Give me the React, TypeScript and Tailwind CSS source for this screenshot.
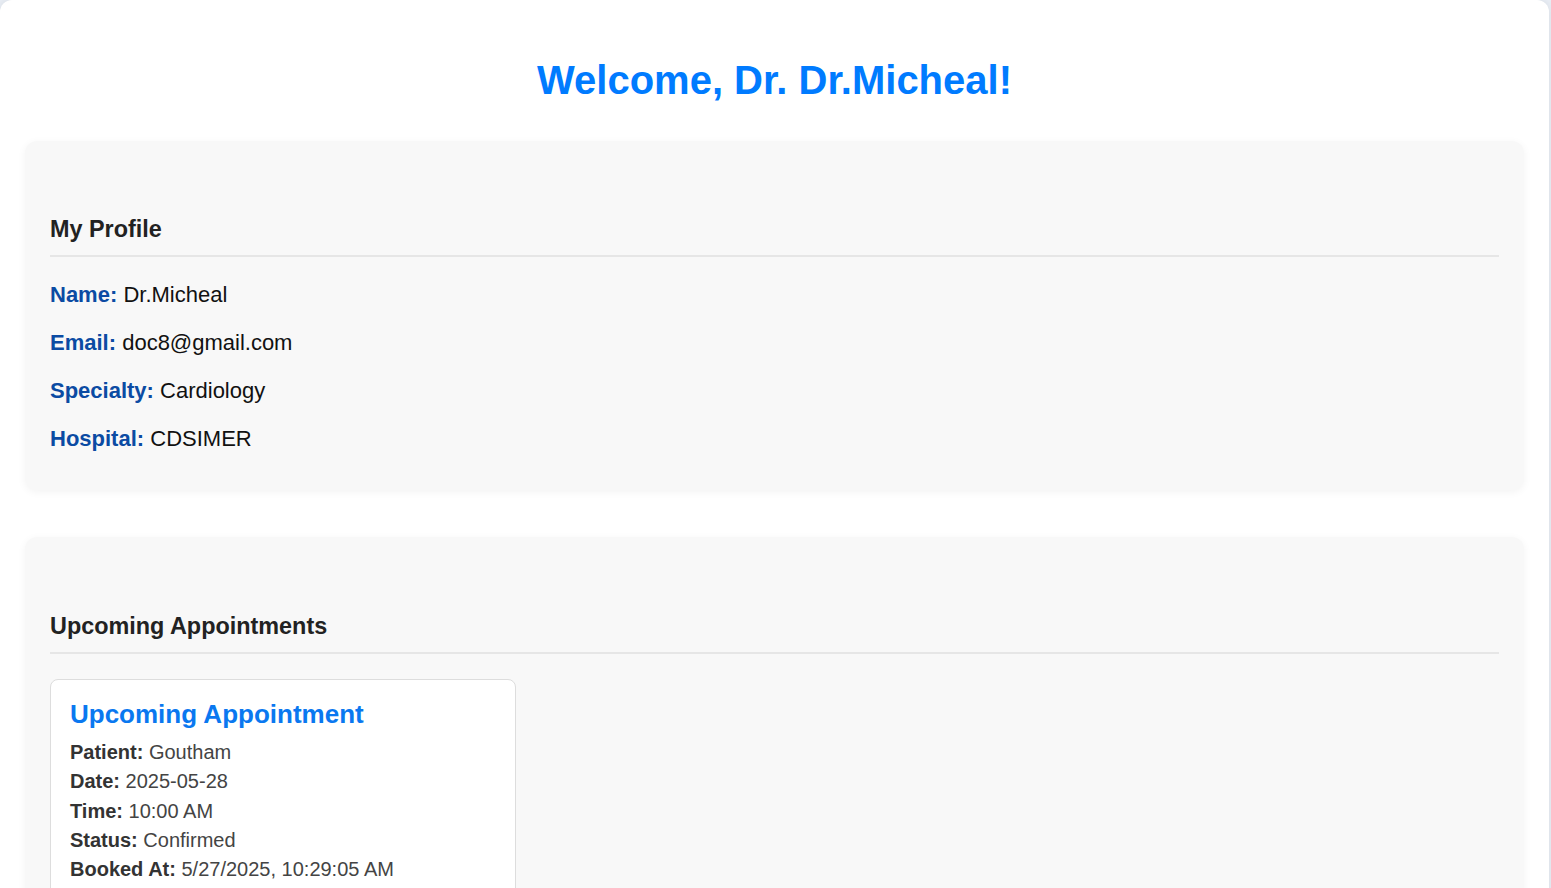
import React from 'react';

const profile = [
  { label: 'Name:', value: 'Dr.Micheal' },
  { label: 'Email:', value: 'doc8@gmail.com' },
  { label: 'Specialty:', value: 'Cardiology' },
  { label: 'Hospital:', value: 'CDSIMER' },
];

const appointment = [
  { label: 'Patient:', value: 'Goutham' },
  { label: 'Date:', value: '2025-05-28' },
  { label: 'Time:', value: '10:00 AM' },
  { label: 'Status:', value: 'Confirmed' },
  { label: 'Booked At:', value: '5/27/2025, 10:29:05 AM' },
];

export default function App() {
  return (
    <div className="min-h-screen bg-[#e9eef5] font-['Liberation_Sans',Arial,sans-serif]">
      <div className="w-[1549px] bg-white rounded-[12px] shadow-[0_0_10px_rgba(0,0,0,0.08)] px-[25px] pb-[40px]">
        <h1 className="pt-[56px] text-center text-[40px] leading-[48px] font-bold text-[#007bff]">
          Welcome, Dr. Dr.Micheal!
        </h1>

        <section className="mt-[37px] bg-[#f8f8f8] rounded-[12px] shadow-[0_2px_8px_rgba(0,0,0,0.05)] px-[25px] pt-[75px] pb-[39px]">
          <h2 className="text-[23.4px] leading-[26px] font-bold text-[#222] pb-[13px] border-b-2 border-[#e6e6e6]">
            My Profile
          </h2>
          <div className="mt-[26px] flex flex-col gap-[24px]">
            {profile.map((f) => (
              <p key={f.label} className="text-[22px] leading-[24px] text-[#111]">
                <span className="font-bold text-[#0b4ba3]">{f.label}</span> {f.value}
              </p>
            ))}
          </div>
        </section>

        <section className="mt-[47px] bg-[#f8f8f8] rounded-[12px] shadow-[0_2px_8px_rgba(0,0,0,0.05)] px-[25px] pt-[76px] pb-[40px]">
          <h2 className="text-[23.4px] leading-[26px] font-bold text-[#222] pb-[13px] border-b-2 border-[#e6e6e6]">
            Upcoming Appointments
          </h2>
          <div className="mt-[25px] w-[466px] bg-white border border-[#dddddd] rounded-[8px] px-[19px] pt-[17px] pb-[16px]">
            <h3 className="text-[26px] leading-[34px] font-bold text-[#0a78f0] mb-[7px]">
              Upcoming Appointment
            </h3>
            {appointment.map((f) => (
              <p key={f.label} className="text-[20px] leading-[29.3px] text-[#444]">
                <span className="font-bold text-[#333]">{f.label}</span> {f.value}
              </p>
            ))}
          </div>
        </section>
      </div>
    </div>
  );
}
